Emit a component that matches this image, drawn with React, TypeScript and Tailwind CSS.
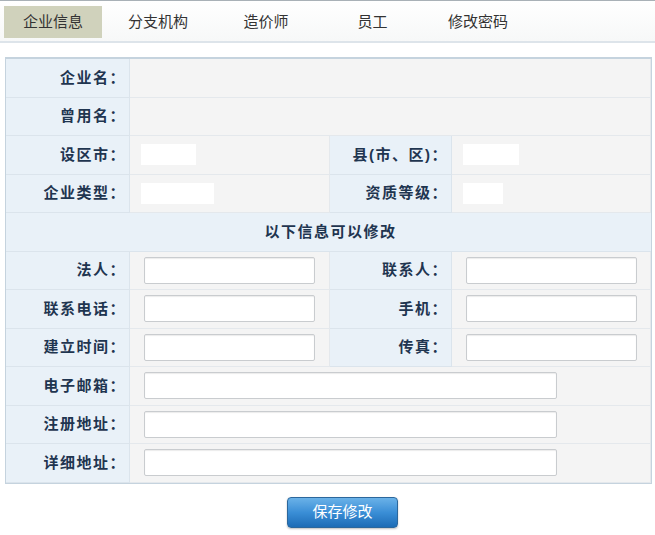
const tabs = [
  { t: "企业信息", w: "w-[98px]" },
  { t: "分支机构", w: "w-[112px]" },
  { t: "造价师", w: "w-[104px]" },
  { t: "员工", w: "w-[109px]" },
  { t: "修改密码", w: "w-[102px]" },
];

const Label = ({ text }: { text: string }) => (
  <div className="flex items-center justify-end pr-[3px] bg-[#e9f1f8] border-r border-b border-[#dbe4ec] text-[15px] tracking-[1.5px] font-bold text-[#1f3550]">
    {text}
  </div>
);

const Cell = ({ children, span = "" }: { children?: React.ReactNode; span?: string }) => (
  <div className={`flex items-center pl-[14px] bg-[#f4f4f4] border-r border-b border-[#e4e8ec] ${span}`}>
    {children}
  </div>
);

const Input = ({ w = "w-[171px]" }: { w?: string }) => (
  <input
    type="text"
    className={`${w} h-[27px] bg-white border border-[#c9cccf] rounded-[2px] shadow-[inset_0_1px_1px_rgba(0,0,0,0.08)] outline-none`}
  />
);

const Blank = ({ w }: { w: string }) => <div className={`${w} h-[21px] -ml-[3px] bg-white`} />;

export default function App() {
  return (
    <div
      className="w-[655px] h-[535px] bg-white"
      style={{ fontFamily: '"Liberation Sans", "Noto Sans CJK SC", sans-serif' }}
    >
      {/* tab bar */}
      <div className="h-[43px] border-t border-[#a9b1b7] border-b-2 border-b-[#dde4ea] bg-gradient-to-b from-white to-[#f7f8f8] flex items-start pt-[5px] pl-[4px]">
        {tabs.map((tab, i) => (
          <div
            key={tab.t}
            className={`${tab.w} h-[32px] flex items-center justify-center text-[15px] text-[#333] ${
              i === 0 ? "bg-[#d0d2bc]" : ""
            }`}
          >
            {tab.t}
          </div>
        ))}
      </div>

      {/* form table */}
      <div className="mt-[14px] ml-[5px] w-[647px] border-t-2 border-[#8796a1] border-l border-[#c5d3de] border-r border-b">
        <div className="grid grid-cols-[124px_200px_122px_1fr] auto-rows-[38.5px]">
          <Label text="企业名：" />
          <Cell span="col-span-3" />
          <Label text="曾用名：" />
          <Cell span="col-span-3" />

          <Label text="设区市：" />
          <Cell>
            <Blank w="w-[55px]" />
          </Cell>
          <Label text="县(市、区)：" />
          <Cell>
            <Blank w="w-[56px]" />
          </Cell>

          <Label text="企业类型：" />
          <Cell>
            <Blank w="w-[73px]" />
          </Cell>
          <Label text="资质等级：" />
          <Cell>
            <Blank w="w-[40px]" />
          </Cell>

          <div className="col-span-4 flex items-center justify-center pl-[4px] bg-[#e9f1f8] border-b border-[#dbe4ec] text-[15px] tracking-[1.5px] font-bold text-[#1f3550]">
            以下信息可以修改
          </div>

          <Label text="法人：" />
          <Cell>
            <Input />
          </Cell>
          <Label text="联系人：" />
          <Cell>
            <Input />
          </Cell>

          <Label text="联系电话：" />
          <Cell>
            <Input />
          </Cell>
          <Label text="手机：" />
          <Cell>
            <Input />
          </Cell>

          <Label text="建立时间：" />
          <Cell>
            <Input />
          </Cell>
          <Label text="传真：" />
          <Cell>
            <Input />
          </Cell>

          <Label text="电子邮箱：" />
          <Cell span="col-span-3">
            <Input w="w-[413px]" />
          </Cell>
          <Label text="注册地址：" />
          <Cell span="col-span-3">
            <Input w="w-[413px]" />
          </Cell>
          <Label text="详细地址：" />
          <Cell span="col-span-3">
            <Input w="w-[413px]" />
          </Cell>
        </div>
      </div>

      {/* save button */}
      <div className="flex justify-center mt-[13px] pl-[30px]">
        <button className="w-[111px] h-[31px] rounded-[4px] border border-[#2b679c] bg-gradient-to-b from-[#6ab2e8] via-[#3a8ed6] to-[#1c6cb6] text-white text-[15px] shadow-[0_1px_2px_rgba(0,0,0,0.25)]">
          保存修改
        </button>
      </div>
    </div>
  );
}
